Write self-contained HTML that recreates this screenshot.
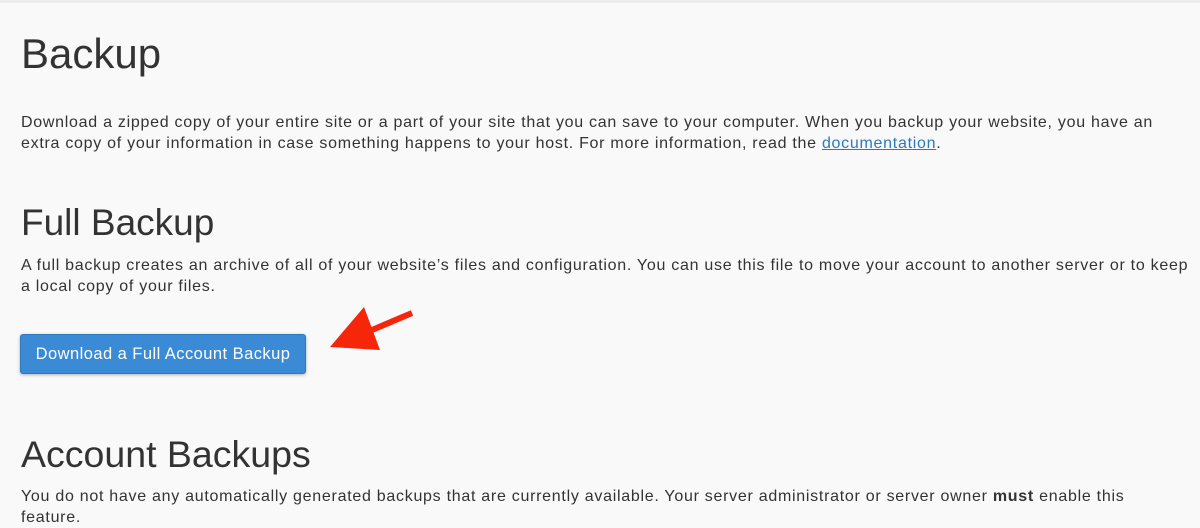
<!DOCTYPE html>
<html><head><style>
body{margin:0;width:1200px;height:526px;background:#f9f9f9;font-family:"Liberation Sans",sans-serif;color:#333;overflow:hidden;position:relative}
.top{position:absolute;top:0;left:0;right:0;height:3px;background:#ececec}
.t{position:absolute;left:21px;white-space:nowrap}
h1,h2{margin:0;font-weight:normal}
p{margin:0;font-size:16px;line-height:21px;letter-spacing:0.72px}
a{color:#2a7ac0}
.btn{position:absolute;left:20px;top:334px;width:286px;height:40px;background:#3a8ad6;border:1px solid #2f78bd;box-sizing:border-box;border-radius:3px;color:#fff;font-size:16.5px;letter-spacing:0.45px;line-height:38px;text-align:center;box-shadow:0 1px 3px rgba(0,0,0,.3)}
</style></head><body>
<div class="top"></div>
<h1 class="t" style="top:30px;font-size:42px;color:#333">Backup</h1>
<div class="t" style="top:112px"><p>Download a zipped copy of your entire site or a part of your site that you can save to your computer. When you backup your website, you have an<br>extra copy of your information in case something happens to your host. For more information, read the <a href="#">documentation</a>.</p></div>
<h2 class="t" style="top:202px;font-size:37px">Full Backup</h2>
<div class="t" style="top:255px"><p>A full backup creates an archive of all of your website’s files and configuration. You can use this file to move your account to another server or to keep<br>a local copy of your files.</p></div>
<div class="btn">Download a Full Account Backup</div>
<svg style="position:absolute;left:0;top:0" width="1200" height="526"><line x1="412" y1="313" x2="365" y2="333" stroke="#f5260a" stroke-width="6"/><polygon points="330,347 364,307 380,350" fill="#f5260a"/></svg>
<h2 class="t" style="top:433px;font-size:37.5px">Account Backups</h2>
<div class="t" style="top:486px"><p>You do not have any automatically generated backups that are currently available. Your server administrator or server owner <b>must</b> enable this<br>feature.</p></div>
</body></html>
